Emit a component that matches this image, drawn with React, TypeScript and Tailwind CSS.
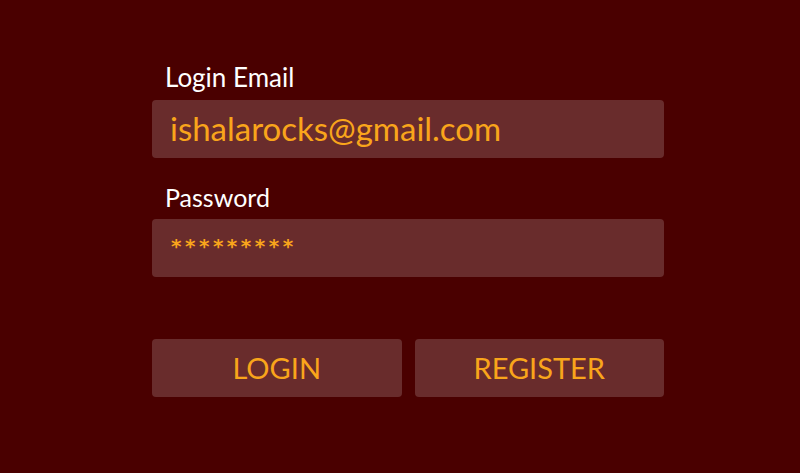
export default function App() {
  return (
    <div className="w-[800px] h-[473px] bg-[#4a0000] flex" style={{ fontFamily: "Lato, 'Noto Sans', sans-serif" }}>
      <div className="w-[512px] ml-[152px] flex flex-col pt-[61px]">
        <label className="pl-[13px] text-white text-[26px] leading-[32px] h-[39px]">Login Email</label>
        <div className="h-[58px] rounded-[4px] bg-[#692c2c] flex items-center pl-[18px] text-[#f9a51b] text-[33px]">
          ishalarocks@gmail.com
        </div>
        <label className="pl-[13px] mt-[23px] text-white text-[25px] leading-[32px] h-[38px]">Password</label>
        <div className="h-[58px] rounded-[4px] bg-[#692c2c] pt-[17px] pl-[19px] text-[#f9a51b] text-[20px] leading-[20px] font-bold tracking-[3.5px]" style={{ fontFamily: "'DejaVu Sans', sans-serif" }}>
          *********
        </div>
        <div className="mt-[62px] grid grid-cols-2 gap-[13px]">
          <button className="h-[58px] rounded-[4px] bg-[#692c2c] text-[#f9a51b] text-[29px]">LOGIN</button>
          <button className="h-[58px] rounded-[4px] bg-[#692c2c] text-[#f9a51b] text-[29px]">REGISTER</button>
        </div>
      </div>
    </div>
  );
}
